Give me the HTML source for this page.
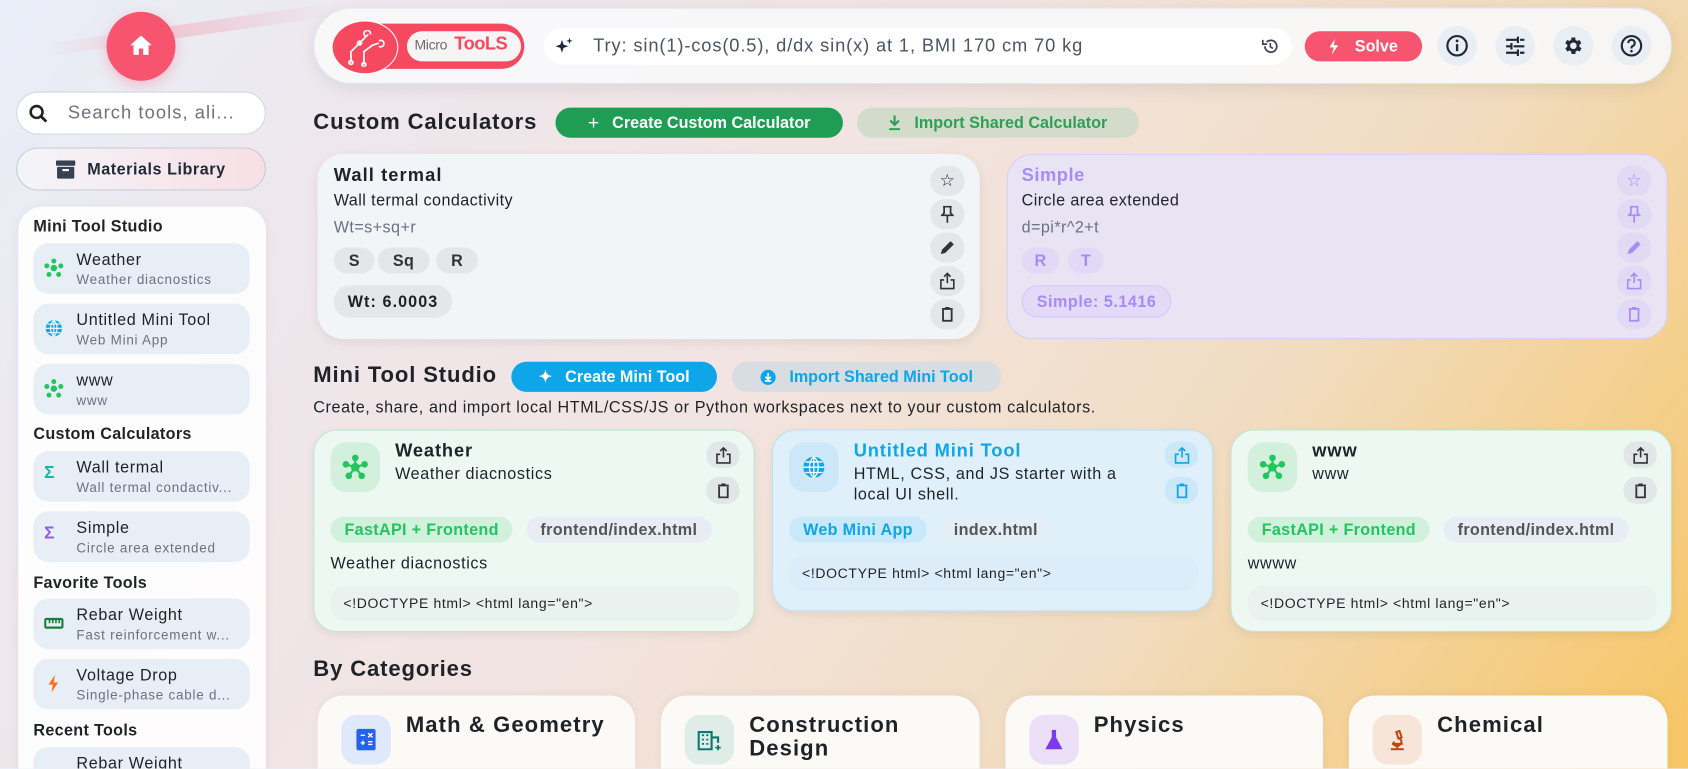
<!DOCTYPE html>
<html><head><meta charset="utf-8"><style>
*{box-sizing:border-box;margin:0;padding:0}
html{background:linear-gradient(125deg,#e9eef8 0%,#efe6ea 25%,#f2e4e2 45%,#f1dcc0 70%,#f7c563 100%)}
html,body{width:1688px;height:768px;overflow:hidden}
body{font-family:"Liberation Sans",sans-serif;color:#1f2328;background:transparent}
#w{position:absolute;left:0;top:0;width:1568px;height:714px;overflow:hidden;transform:scale(1.07653);transform-origin:0 0}
.a{position:absolute;white-space:nowrap}
.b{font-weight:bold}
.home{left:99px;top:11px;width:64px;height:64px;border-radius:50%;background:#f6546f;box-shadow:0 4px 12px rgba(246,84,111,.3)}
.search{left:15px;top:85px;width:232px;height:40px;border-radius:20px;background:#fff;border:1px solid #d3d8e2}
.mat{left:15px;top:137px;width:232px;height:40px;border-radius:20px;background:linear-gradient(90deg,#f4f5f9,#f7dfe5);border:1px solid #c7cbd4}
.side{left:17px;top:192px;width:230px;height:540px;border-radius:22px;background:rgba(255,255,255,.88);box-shadow:0 2px 10px rgba(0,0,0,.05)}
.sh{left:31px;font-size:15px;font-weight:bold;letter-spacing:.3px}
.si{left:31px;width:201px;height:47px;border-radius:14px;background:#e8eef6}
.si .t{position:absolute;left:40px;top:7px;font-size:15px;letter-spacing:.6px;white-space:nowrap}
.si .s{position:absolute;left:40px;top:27px;font-size:12.5px;color:#6b7280;letter-spacing:.7px;white-space:nowrap}
.si .ic{position:absolute;left:10px;top:14px;width:18px;height:18px}
.hdr{left:291px;top:7px;width:1262px;height:71px;border-radius:36px;background:rgba(248,248,250,.92);box-shadow:0 4px 16px rgba(0,0,0,.08);border:1px solid #e2e6ef}
.inp{left:505px;top:26px;width:695px;height:34px;border-radius:17px;background:#fff}
.circ{width:37px;height:37px;border-radius:50%;background:#e9edf4;top:24px}
.h2{left:291px;font-size:20.5px;font-weight:bold;letter-spacing:.8px}
.btn{height:28px;border-radius:14px;font-size:15px;font-weight:bold;display:flex;align-items:center;justify-content:center;gap:8px}
.card{border-radius:24px}
.act{width:32px;height:28px;border-radius:14px;display:flex;align-items:center;justify-content:center}
.chip{height:24px;border-radius:12px;font-size:15px;letter-spacing:.3px;font-weight:bold;display:flex;align-items:center;padding:0 13px}
.mc{border-radius:22px;box-shadow:0 3px 8px rgba(0,0,0,.06)}
.mc .ib{position:absolute;left:15px;top:11px;width:46px;height:46px;border-radius:14px;display:flex;align-items:center;justify-content:center}
.mc .tt{position:absolute;left:75px;top:9px;font-size:17px;font-weight:bold;letter-spacing:.8px}
.mc .dd{position:absolute;left:75px;top:31px;font-size:15px;line-height:19px;letter-spacing:.6px;white-space:nowrap}
.mc .ab{position:absolute;left:364px;width:31px;height:25px;border-radius:12px;display:flex;align-items:center;justify-content:center}
.code{position:absolute;left:15px;width:380px;height:33px;border-radius:14px;font-size:13px;letter-spacing:.6px;padding:9px 12px;white-space:nowrap}
.cat{top:646px;height:80px;border-radius:24px 24px 0 0;background:#fcfaf6;box-shadow:0 -2px 8px rgba(0,0,0,.04)}
.cat .ib{position:absolute;left:22px;top:18px;width:46px;height:46px;border-radius:14px;display:flex;align-items:center;justify-content:center}
.cat .tt{position:absolute;left:82px;top:17px;font-size:20.5px;font-weight:bold;line-height:22px;letter-spacing:1px}
</style></head><body><div id="w">
<div class="a" style="left:40px;top:22px;width:270px;height:12px;background:linear-gradient(90deg,rgba(240,170,185,0),rgba(240,170,185,.5),rgba(240,170,185,0));transform:rotate(-8deg)"></div>
<div class="a home"><svg class="a" style="left:21px;top:21px" width="22" height="20" viewBox="0 0 22 20"><path d="M11 1 L1 10 H4 V19 H9 V13 H13 V19 H18 V10 H21 Z" fill="#fff"/></svg></div>
<div class="a search"><svg class="a" style="left:11px;top:11px" width="18" height="18" viewBox="0 0 18 18"><circle cx="7" cy="7" r="5.5" stroke="#1f2328" stroke-width="2.4" fill="none"/><path d="M11 11 L16 16" stroke="#1f2328" stroke-width="2.6"/></svg><span class="a" style="left:47px;top:9px;font-size:17px;color:#6b7280;letter-spacing:1px">Search tools, ali...</span></div>
<div class="a mat"><svg class="a" style="left:36px;top:11px" width="18" height="17" viewBox="0 0 18 17"><rect x="0" y="0" width="18" height="5" rx="1" fill="#374151"/><rect x="1" y="6" width="16" height="11" rx="1" fill="#374151"/><rect x="6" y="8" width="6" height="2" fill="#fff"/></svg><span class="a b" style="left:65px;top:11px;font-size:15px;letter-spacing:.5px;color:#1f2937">Materials Library</span></div>
<div class="a side"></div>
<div class="a sh" style="top:202px">Mini Tool Studio</div>
<div class="a si" style="top:226px"><svg class="ic" viewBox="0 0 18 18"><g fill="#22c55e"><circle cx="9" cy="9" r="3"/><circle cx="9" cy="2.5" r="2.3"/><circle cx="2.5" cy="7" r="2.3"/><circle cx="15.5" cy="7" r="2.3"/><circle cx="4.5" cy="15" r="2.3"/><circle cx="13.5" cy="15" r="2.3"/></g></svg><div class="t">Weather</div><div class="s">Weather diacnostics</div></div>
<div class="a si" style="top:282px"><svg class="ic" viewBox="0 0 18 18"><circle cx="9" cy="9" r="7.5" fill="#0ea5e9"/><path d="M1.5 9H16.5M9 1.5V16.5M3 5H15M3 13H15M9 1.5C5 5 5 13 9 16.5M9 1.5C13 5 13 13 9 16.5" stroke="#fff" stroke-width="1" fill="none"/></svg><div class="t">Untitled Mini Tool</div><div class="s">Web Mini App</div></div>
<div class="a si" style="top:338px"><svg class="ic" viewBox="0 0 18 18"><g fill="#22c55e"><circle cx="9" cy="9" r="3"/><circle cx="9" cy="2.5" r="2.3"/><circle cx="2.5" cy="7" r="2.3"/><circle cx="15.5" cy="7" r="2.3"/><circle cx="4.5" cy="15" r="2.3"/><circle cx="13.5" cy="15" r="2.3"/></g></svg><div class="t">www</div><div class="s">www</div></div>
<div class="a sh" style="top:395px">Custom Calculators</div>
<div class="a si" style="top:419px"><span class="ic b" style="color:#14b8a6;font-size:16px;top:12px">Σ</span><div class="t">Wall termal</div><div class="s">Wall termal condactiv...</div></div>
<div class="a si" style="top:475px"><span class="ic b" style="color:#8b5cf6;font-size:16px;top:12px">Σ</span><div class="t">Simple</div><div class="s">Circle area extended</div></div>
<div class="a sh" style="top:533px">Favorite Tools</div>
<div class="a si" style="top:556px"><svg class="ic" viewBox="0 0 18 18"><rect x="1" y="5" width="16" height="8" rx="1" fill="none" stroke="#15803d" stroke-width="2"/><path d="M5 5V9M8 5V9M11 5V9M14 5V9" stroke="#15803d" stroke-width="1.5"/></svg><div class="t">Rebar Weight</div><div class="s">Fast reinforcement w...</div></div>
<div class="a si" style="top:612px"><svg class="ic" viewBox="0 0 18 18"><path d="M10 1 L4 10 H8 L7 17 L13 8 H9 Z" fill="#f97316"/></svg><div class="t">Voltage Drop</div><div class="s">Single-phase cable d...</div></div>
<div class="a sh" style="top:670px">Recent Tools</div>
<div class="a si" style="top:694px"><div class="t">Rebar Weight</div></div>

<div class="a hdr"></div>
<div class="a" style="left:310px;top:22px;width:177px;height:42px;border-radius:21px;background:#f6485f"></div>
<div class="a" style="left:308px;top:19px;width:62px;height:50px;border-radius:50%;border:1.5px solid #fff;background:#f6485f"></div>
<svg class="a" style="left:322px;top:28px" width="38" height="34" viewBox="0 0 38 34"><g stroke="#fff" stroke-width="1.6" fill="none"><path d="M4 30V20L12 12L20 4"/><circle cx="4" cy="30" r="1.8"/><circle cx="12" cy="12" r="1.8"/><path d="M18 6a3 3 0 1 1 4 -2"/><path d="M16 32V20L24 14L30 12"/><circle cx="16" cy="32" r="1.8"/><path d="M30 10a3 3 0 1 1 0 5"/></g></svg>
<div class="a" style="left:378px;top:29px;width:106px;height:28px;border-radius:14px;background:#f6f4f4"></div>
<div class="a" style="left:385px;top:34px;font-size:13px;color:#6b6b6b;letter-spacing:-.3px">Micro</div>
<div class="a b" style="left:422px;top:31px;font-size:17px;color:#f6485f;letter-spacing:-.5px">TooLS</div>
<div class="a inp"></div>
<svg class="a" style="left:516px;top:35px" width="16" height="16" viewBox="0 0 16 16"><path d="M6 2 L7.5 6.5 L12 8 L7.5 9.5 L6 14 L4.5 9.5 L0 8 L4.5 6.5Z" fill="#1f2937"/><path d="M13 0 L13.7 2.3 L16 3 L13.7 3.7 L13 6 L12.3 3.7 L10 3 L12.3 2.3Z" fill="#1f2937"/></svg>
<div class="a" style="left:551px;top:33px;font-size:17px;color:#4b5563;letter-spacing:.8px">Try: sin(1)-cos(0.5), d/dx sin(x) at 1, BMI 170 cm 70 kg</div>
<svg class="a" style="left:1172px;top:35px" width="16" height="16" viewBox="0 0 16 16"><path d="M3 8a5.5 5.5 0 1 0 1.6-3.9" stroke="#374151" stroke-width="1.6" fill="none"/><path d="M1 2V6H5" stroke="#374151" stroke-width="1.6" fill="none"/><path d="M8 5V8.5L10.5 10" stroke="#374151" stroke-width="1.5" fill="none"/></svg>
<div class="a btn" style="left:1212px;top:29px;width:109px;background:#f6546f;color:#fff;font-size:15px"><svg width="10" height="15" viewBox="0 0 10 15"><path d="M6 0 L1 8 H5 L3 15 L9 6 H5 Z" fill="#fff"/></svg><span style="margin-left:6px">Solve</span></div>
<div class="a circ" style="left:1335px"><svg class="a" style="left:8px;top:8px" width="21" height="21" viewBox="0 0 21 21"><circle cx="10.5" cy="10.5" r="9" stroke="#1f2937" stroke-width="2" fill="none"/><path d="M10.5 9V15.5" stroke="#1f2937" stroke-width="2.2"/><circle cx="10.5" cy="6" r="1.3" fill="#1f2937"/></svg></div>
<div class="a circ" style="left:1389px"><svg class="a" style="left:9px;top:9px" width="19" height="19" viewBox="0 0 19 19"><path d="M1 4H11M14 4H18M1 10H5M8 10H18M1 16H11M14 16H18M12 1V7M6 7V13M12 13V19" stroke="#1f2937" stroke-width="2"/></svg></div>
<div class="a circ" style="left:1443px"><svg class="a" style="left:8px;top:8px" width="21" height="21" viewBox="0 0 24 24"><path fill="#1f2937" d="M19.4 13a7.5 7.5 0 0 0 0-2l2.1-1.6-2-3.5-2.5 1a7.5 7.5 0 0 0-1.7-1L15 3.2h-4l-.4 2.7a7.5 7.5 0 0 0-1.7 1l-2.5-1-2 3.5L6.6 11a7.5 7.5 0 0 0 0 2l-2.1 1.6 2 3.5 2.5-1a7.5 7.5 0 0 0 1.7 1l.4 2.7h4l.4-2.7a7.5 7.5 0 0 0 1.7-1l2.5 1 2-3.5zM13 15.5a3.5 3.5 0 1 1 0-7 3.5 3.5 0 0 1 0 7z" transform="translate(-1 0)"/></svg></div>
<div class="a circ" style="left:1497px"><svg class="a" style="left:8px;top:8px" width="21" height="21" viewBox="0 0 21 21"><circle cx="10.5" cy="10.5" r="9" stroke="#1f2937" stroke-width="2" fill="none"/><path d="M7.5 8a3 3 0 1 1 4 2.8c-1 .4-1 1-1 2.2" stroke="#1f2937" stroke-width="2" fill="none"/><circle cx="10.5" cy="15.5" r="1.2" fill="#1f2937"/></svg></div>

<div class="a h2" style="top:102px">Custom Calculators</div>
<div class="a btn" style="left:516px;top:100px;width:267px;background:#1f9d55;color:#fff"><span style="font-size:18px;font-weight:normal">+</span><span style="margin-left:4px">Create Custom Calculator</span></div>
<div class="a btn" style="left:796px;top:100px;width:262px;background:#d3dccb;color:#2ea055"><svg width="12" height="14" viewBox="0 0 12 14"><path d="M6 0V8M2 5L6 9L10 5M1 13H11" stroke="#2ea055" stroke-width="2" fill="none"/></svg><span style="margin-left:4px">Import Shared Calculator</span></div>

<div class="a card" style="left:295px;top:143px;width:615px;height:172px;background:#f1f5f7;box-shadow:0 3px 10px rgba(0,0,0,.07)"></div>
<div class="a b" style="left:310px;top:153px;font-size:17px;letter-spacing:1px">Wall termal</div>
<div class="a" style="left:310px;top:178px;font-size:15px;letter-spacing:.4px">Wall termal condactivity</div>
<div class="a" style="left:310px;top:203px;font-size:15px;letter-spacing:.4px;color:#6b7280">Wt=s+sq+r</div>
<div class="a chip" style="left:310px;top:230px;background:#e3e7ea;color:#333;padding:0 14px">S</div>
<div class="a chip" style="left:351px;top:230px;background:#e3e7ea;color:#333;padding:0 14px">Sq</div>
<div class="a chip" style="left:405px;top:230px;background:#e3e7ea;color:#333;padding:0 14px">R</div>
<div class="a chip" style="left:310px;top:265px;height:30px;border-radius:15px;background:#e3e7ea;color:#222;font-size:15px;letter-spacing:1px">Wt: 6.0003</div>
<div class="a" style="left:864px;top:154px">
<div class="act" style="background:#e3e7ea;margin-bottom:3px">☆</div>
<div class="act" style="background:#e3e7ea;margin-bottom:3px"><svg width="12" height="16" viewBox="0 0 12 16"><path d="M2 1H10M3 1V7L1 9H11L9 7V1M6 9V16" stroke="#333" stroke-width="1.6" fill="none"/></svg></div>
<div class="act" style="background:#e3e7ea;margin-bottom:3px"><svg width="14" height="14" viewBox="0 0 14 14"><path d="M1 13L2 9L10 1L13 4L5 12Z" fill="#333"/></svg></div>
<div class="act" style="background:#e3e7ea;margin-bottom:3px"><svg width="14" height="16" viewBox="0 0 14 16"><path d="M7 1V10M4 4L7 1L10 4M4 7H1V15H13V7H10" stroke="#333" stroke-width="1.5" fill="none"/></svg></div>
<div class="act" style="background:#e3e7ea"><svg width="12" height="14" viewBox="0 0 12 14"><path d="M1 2H11M4 1H8M2 3V13H10V3" stroke="#333" stroke-width="1.7" fill="none"/></svg></div>
</div>

<div class="a card" style="left:935px;top:143px;width:614px;height:172px;background:#e8e4f4;border:1px solid #d9cef5"></div>
<div class="a b" style="left:949px;top:153px;font-size:17px;letter-spacing:.5px;color:#a78bfa">Simple</div>
<div class="a" style="left:949px;top:178px;font-size:15px;letter-spacing:.4px">Circle area extended</div>
<div class="a" style="left:949px;top:203px;font-size:15px;letter-spacing:.4px;color:#6b7280">d=pi*r^2+t</div>
<div class="a chip" style="left:949px;top:230px;background:#e2d9f7;color:#a78bfa;padding:0 12px">R</div>
<div class="a chip" style="left:992px;top:230px;background:#e2d9f7;color:#a78bfa;padding:0 12px">T</div>
<div class="a chip" style="left:949px;top:265px;height:30px;border-radius:15px;background:#e2daf7;border:1px solid #d6c9f5;color:#a78bfa;font-size:15px;letter-spacing:.5px">Simple: 5.1416</div>
<div class="a" style="left:1502px;top:154px;color:#a78bfa">
<div class="act" style="background:#e1daf4;margin-bottom:3px">☆</div>
<div class="act" style="background:#e1daf4;margin-bottom:3px"><svg width="12" height="16" viewBox="0 0 12 16"><path d="M2 1H10M3 1V7L1 9H11L9 7V1M6 9V16" stroke="#a78bfa" stroke-width="1.6" fill="none"/></svg></div>
<div class="act" style="background:#e1daf4;margin-bottom:3px"><svg width="14" height="14" viewBox="0 0 14 14"><path d="M1 13L2 9L10 1L13 4L5 12Z" fill="#a78bfa"/></svg></div>
<div class="act" style="background:#e1daf4;margin-bottom:3px"><svg width="14" height="16" viewBox="0 0 14 16"><path d="M7 1V10M4 4L7 1L10 4M4 7H1V15H13V7H10" stroke="#a78bfa" stroke-width="1.5" fill="none"/></svg></div>
<div class="act" style="background:#e1daf4"><svg width="12" height="14" viewBox="0 0 12 14"><path d="M1 2H11M4 1H8M2 3V13H10V3" stroke="#a78bfa" stroke-width="1.7" fill="none"/></svg></div>
</div>

<div class="a h2" style="top:337px">Mini Tool Studio</div>
<div class="a btn" style="left:475px;top:336px;width:191px;background:#0ea5e9;color:#fff"><span>✦</span><span style="margin-left:4px">Create Mini Tool</span></div>
<div class="a btn" style="left:680px;top:336px;width:250px;background:#d7dde1;color:#0ea5e9"><svg width="15" height="15" viewBox="0 0 15 15"><circle cx="7.5" cy="7.5" r="7" fill="#0ea5e9"/><path d="M7.5 3.5V9M5 7L7.5 9.5L10 7M4.5 11H10.5" stroke="#fff" stroke-width="1.5" fill="none"/></svg><span style="margin-left:4px">Import Shared Mini Tool</span></div>
<div class="a" style="left:291px;top:370px;font-size:15px;letter-spacing:.55px">Create, share, and import local HTML/CSS/JS or Python workspaces next to your custom calculators.</div>

<div class="a mc" style="left:291px;top:399px;width:410px;height:188px;background:#eef8f3;border:1.5px solid #bfe7cf">
<div class="ib" style="background:#d3f0dd"><svg width="24" height="24" viewBox="0 0 18 18"><g fill="#22c55e"><circle cx="9" cy="9" r="3"/><circle cx="9" cy="2.5" r="2.3"/><circle cx="2.5" cy="7" r="2.3"/><circle cx="15.5" cy="7" r="2.3"/><circle cx="4.5" cy="15" r="2.3"/><circle cx="13.5" cy="15" r="2.3"/></g><path d="M9 9L9 2.5M9 9L2.5 7M9 9L15.5 7M9 9L4.5 15M9 9L13.5 15" stroke="#22c55e" stroke-width="1.5"/></svg></div>
<div class="tt">Weather</div><div class="dd">Weather diacnostics</div>
<div class="ab" style="top:10px;background:#e1e6e6"><svg width="14" height="16" viewBox="0 0 14 16"><path d="M7 1V10M4 4L7 1L10 4M4 7H1V15H13V7H10" stroke="#333" stroke-width="1.5" fill="none"/></svg></div>
<div class="ab" style="top:43px;background:#e1e6e6"><svg width="12" height="14" viewBox="0 0 12 14"><path d="M1 2H11M4 1H8M2 3V13H10V3" stroke="#333" stroke-width="1.7" fill="none"/></svg></div>
<div class="chip a" style="left:15px;top:80px;background:#d2f1dc;color:#22c55e">FastAPI + Frontend</div>
<div class="chip a" style="left:197px;top:80px;background:#e8ecf4;color:#555">frontend/index.html</div>
<div class="a" style="left:15px;top:115px;font-size:15px;letter-spacing:.6px">Weather diacnostics</div>
<div class="code" style="top:144px;background:#eaf2ef">&lt;!DOCTYPE html&gt; &lt;html lang="en"&gt;</div>
</div>

<div class="a mc" style="left:717px;top:399px;width:410px;height:169px;background:#dff0fb;border:1.5px solid #bde0f5">
<div class="ib" style="background:#cce8f8"><svg width="22" height="22" viewBox="0 0 18 18"><circle cx="9" cy="9" r="8" fill="#0ea5e9"/><path d="M1 9H17M9 1V17M2.5 5H15.5M2.5 13H15.5M9 1C4.5 5 4.5 13 9 17M9 1C13.5 5 13.5 13 9 17" stroke="#fff" stroke-width="1" fill="none"/></svg></div>
<div class="tt" style="color:#0ea5e9">Untitled Mini Tool</div><div class="dd">HTML, CSS, and JS starter with a<br>local UI shell.</div>
<div class="ab" style="top:10px;background:#cce8f8"><svg width="14" height="16" viewBox="0 0 14 16"><path d="M7 1V10M4 4L7 1L10 4M4 7H1V15H13V7H10" stroke="#0ea5e9" stroke-width="1.5" fill="none"/></svg></div>
<div class="ab" style="top:43px;background:#cce8f8"><svg width="12" height="14" viewBox="0 0 12 14"><path d="M1 2H11M4 1H8M2 3V13H10V3" stroke="#0ea5e9" stroke-width="1.7" fill="none"/></svg></div>
<div class="chip a" style="left:15px;top:80px;background:#c9e8f9;color:#0ea5e9">Web Mini App</div>
<div class="chip a" style="left:155px;top:80px;background:#e4eef6;color:#555">index.html</div>
<div class="code" style="top:116px;background:#dcecf8">&lt;!DOCTYPE html&gt; &lt;html lang="en"&gt;</div>
</div>

<div class="a mc" style="left:1143px;top:399px;width:410px;height:188px;background:#eef8f3;border:1.5px solid #bfe7cf">
<div class="ib" style="background:#d3f0dd"><svg width="24" height="24" viewBox="0 0 18 18"><g fill="#22c55e"><circle cx="9" cy="9" r="3"/><circle cx="9" cy="2.5" r="2.3"/><circle cx="2.5" cy="7" r="2.3"/><circle cx="15.5" cy="7" r="2.3"/><circle cx="4.5" cy="15" r="2.3"/><circle cx="13.5" cy="15" r="2.3"/></g><path d="M9 9L9 2.5M9 9L2.5 7M9 9L15.5 7M9 9L4.5 15M9 9L13.5 15" stroke="#22c55e" stroke-width="1.5"/></svg></div>
<div class="tt">www</div><div class="dd">www</div>
<div class="ab" style="top:10px;background:#e1e6e6"><svg width="14" height="16" viewBox="0 0 14 16"><path d="M7 1V10M4 4L7 1L10 4M4 7H1V15H13V7H10" stroke="#333" stroke-width="1.5" fill="none"/></svg></div>
<div class="ab" style="top:43px;background:#e1e6e6"><svg width="12" height="14" viewBox="0 0 12 14"><path d="M1 2H11M4 1H8M2 3V13H10V3" stroke="#333" stroke-width="1.7" fill="none"/></svg></div>
<div class="chip a" style="left:15px;top:80px;background:#d2f1dc;color:#22c55e">FastAPI + Frontend</div>
<div class="chip a" style="left:197px;top:80px;background:#e8ecf4;color:#555">frontend/index.html</div>
<div class="a" style="left:15px;top:115px;font-size:15px;letter-spacing:.6px">wwww</div>
<div class="code" style="top:144px;background:#eaf2ef">&lt;!DOCTYPE html&gt; &lt;html lang="en"&gt;</div>
</div>

<div class="a h2" style="top:610px">By Categories</div>
<div class="a cat" style="left:295px;width:295px"><div class="ib" style="background:#e0e8fb"><svg width="18" height="20" viewBox="0 0 18 20"><rect width="18" height="20" rx="2" fill="#2563eb"/><path d="M4 6H8M11 4L15 8M15 4L11 8M4 13H8M6 11V15M11 12H15M11 14.5H15" stroke="#fff" stroke-width="1.3"/></svg></div><div class="tt">Math &amp; Geometry</div></div>
<div class="a cat" style="left:614px;width:296px"><div class="ib" style="background:#dfece8"><svg width="22" height="20" viewBox="0 0 22 20"><path d="M1 19V3H13V19ZM13 8H19V13" fill="none" stroke="#0f766e" stroke-width="2"/><path d="M4 6H6M8 6H10M4 10H6M8 10H10M4 14H6M8 14H10M19 15V20M16.5 17.5H21.5" stroke="#0f766e" stroke-width="1.6"/></svg></div><div class="tt">Construction<br>Design</div></div>
<div class="a cat" style="left:934px;width:295px"><div class="ib" style="background:#ece0f8"><svg width="18" height="20" viewBox="0 0 18 20"><path d="M5 1H13M7 1V8L1 19H17L11 8V1" fill="#7c3aed"/></svg></div><div class="tt">Physics</div></div>
<div class="a cat" style="left:1253px;width:296px"><div class="ib" style="background:#f6e5d8"><svg width="18" height="20" viewBox="0 0 18 20"><path d="M3 19H15M9 19V16M4 14H14M8 3L11 2L13 8L10 9ZM11 9C14 11 13 15 9 16C6 16 5 14 6 12" stroke="#c2410c" stroke-width="1.8" fill="none"/></svg></div><div class="tt">Chemical</div></div>
</div></body></html>
